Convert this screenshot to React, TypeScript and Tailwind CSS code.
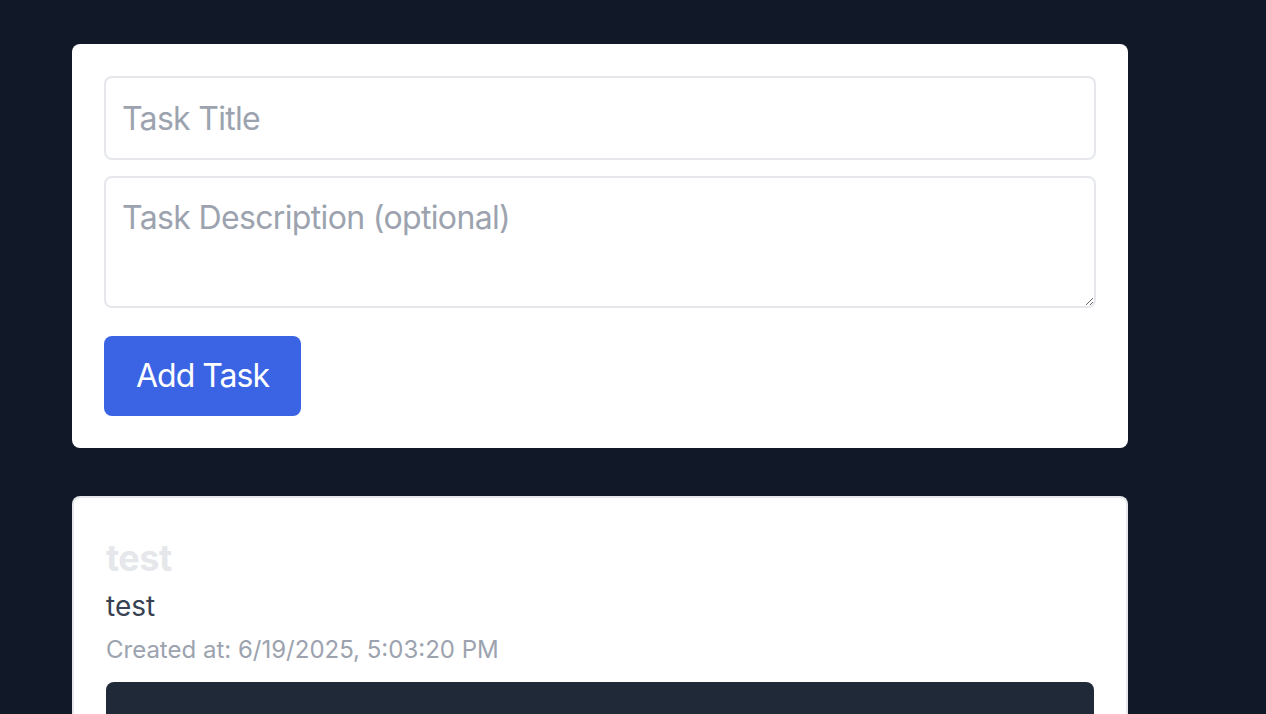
import React from "react";

export default function App() {
  return (
    <div
      className="min-h-[714px] w-full bg-[#111827] pt-[44px] pl-[72px]"
      style={{ fontFamily: "Inter, 'Noto Sans', sans-serif" }}
    >
      <div className="w-[1056px] rounded-[8px] bg-white p-[32px]">
        <input
          type="text"
          placeholder="Task Title"
          className="block h-[84px] w-full rounded-[8px] border-2 border-[#e5e7eb] px-[16px] py-[16px] text-[32px] leading-[48px] tracking-[-0.7px] text-[#374151] placeholder:text-[#9ca3af] outline-none"
        />
        <textarea
          placeholder="Task Description (optional)"
          rows={2}
          className="mt-[16px] block h-[132px] w-full rounded-[8px] border-2 border-[#e5e7eb] px-[16px] py-[16px] text-[32px] leading-[48px] tracking-[-0.65px] text-[#374151] placeholder:text-[#9ca3af] outline-none"
        />
        <button className="mt-[28px] block h-[80px] rounded-[8px] bg-[#3a64e4] px-[32px] text-[32px] leading-[48px] tracking-[-1px] text-white">
          Add Task
        </button>
      </div>

      <div className="mt-[48px] w-[1056px] rounded-t-[8px] border-2 border-b-0 border-[#e5e7eb] bg-white px-[32px] pt-[32px] pb-0">
        <div className="text-[36px] font-bold leading-[56px] tracking-[-0.5px] text-[#e5e7eb]">test</div>
        <div className="text-[28px] leading-[40px] text-[#374151]">test</div>
        <div className="mt-[8px] text-[24px] leading-[32px] text-[#9ca3af]">
          Created at: 6/19/2025, 5:03:20 PM
        </div>
        <div className="mt-[16px] h-[40px] w-full rounded-t-[8px] bg-[#1f2937]" />
      </div>
    </div>
  );
}
